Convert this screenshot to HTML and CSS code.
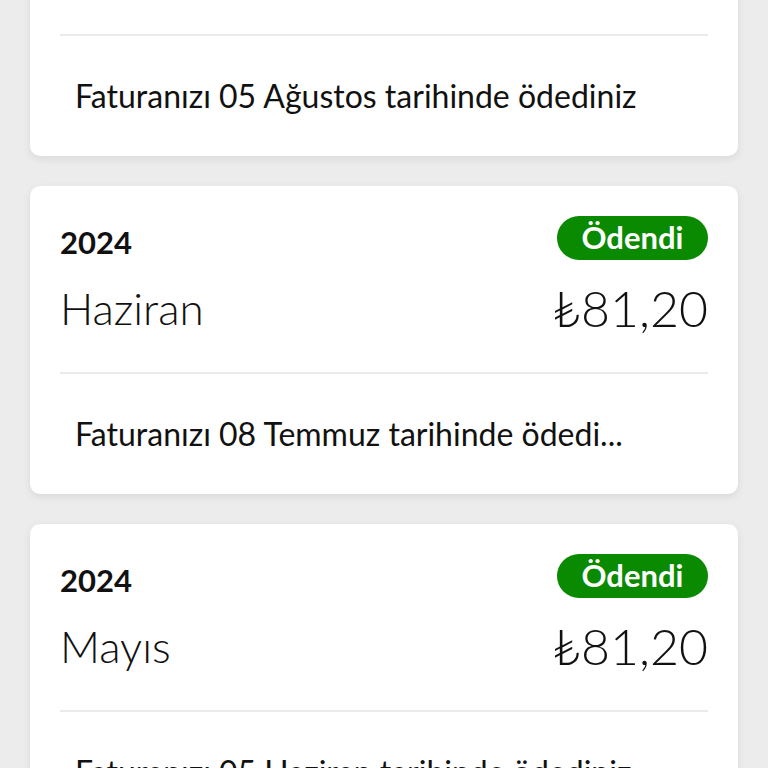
FILE: index.html
```html
<!DOCTYPE html>
<html lang="tr">
<head>
    <meta charset="UTF-8">
    <title>Faturalar</title>
    <link rel="stylesheet" href="styles.css">
</head>
<body>
    <div class="bills">
        <div class="bill">
            <div class="bill-head">
                <span class="bill-year">2024</span>
                <span class="bill-status">Ödendi</span>
            </div>
            <div class="bill-main">
                <span class="bill-month">Temmuz</span>
                <span class="bill-amount">₺81,20</span>
            </div>
            <div class="bill-foot">Faturanızı 05 Ağustos tarihinde ödediniz</div>
        </div>
        <div class="bill">
            <div class="bill-head">
                <span class="bill-year">2024</span>
                <span class="bill-status">Ödendi</span>
            </div>
            <div class="bill-main">
                <span class="bill-month">Haziran</span>
                <span class="bill-amount">₺81,20</span>
            </div>
            <div class="bill-foot">Faturanızı 08 Temmuz tarihinde ödedi...</div>
        </div>
        <div class="bill">
            <div class="bill-head">
                <span class="bill-year">2024</span>
                <span class="bill-status">Ödendi</span>
            </div>
            <div class="bill-main">
                <span class="bill-month">Mayıs</span>
                <span class="bill-amount">₺81,20</span>
            </div>
            <div class="bill-foot">Faturanızı 05 Haziran tarihinde ödediniz</div>
        </div>
    </div>
</body>
</html>
```
FILE: styles.css
```css
html, body{
    margin: 0;
    padding: 0;
    background: #ececec;
    font-family: "Lato", "Noto Sans", sans-serif;
    color: #111;
    overflow: hidden;
}
.bills{
    display: flex;
    flex-direction: column;
    gap: 30px;
    padding: 0 30px;
    margin-top: -152px;
}
.bill{
    background: #fff;
    border-radius: 10px;
    box-shadow: 0 3px 8px rgba(0,0,0,0.08);
    padding: 30px 30px 0;
}
.bill-head{
    display: flex;
    justify-content: space-between;
    align-items: center;
    height: 44px;
}
.bill-year{
    font-size: 31px;
    font-weight: 700;
    padding-top: 8px;
}
.bill-status{
    background: #0a8a00;
    color: #fff;
    font-weight: 700;
    font-size: 31px;
    line-height: 42px;
    height: 44px;
    width: 151px;
    text-align: center;
    border-radius: 22px;
}
.bill-main{
    display: flex;
    justify-content: space-between;
    align-items: center;
    height: 96px;
    padding-bottom: 16px;
    border-bottom: 2px solid #ebebeb;
}
.bill-month{
    font-size: 44px;
    font-weight: 300;
}
.bill-amount{
    font-size: 50px;
    font-weight: 300;
}
.bill-foot{
    height: 120px;
    line-height: 120px;
    padding-left: 15px;
    font-size: 32px;
    white-space: nowrap;
    overflow: hidden;
}
```
